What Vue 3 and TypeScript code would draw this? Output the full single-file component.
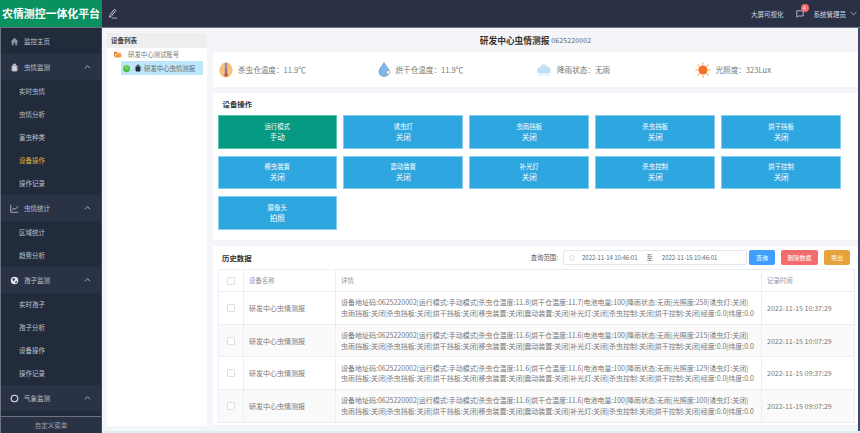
<script setup lang="ts">
const menu = [
  { name: '监控主页', icon: 'home', subs: [] as string[] },
  { name: '虫情监测', icon: 'bug', subs: ['实时虫情', '虫情分析', '害虫种类', '设备操作', '操作记录'] },
  { name: '虫情统计', icon: 'chart', subs: ['区域统计', '趋势分析'] },
  { name: '孢子监测', icon: 'globe', subs: ['实时孢子', '孢子分析', '设备操作', '操作记录'] },
  { name: '气象监测', icon: 'ring', subs: [] as string[] },
];

const ops = [
  ['运行模式', '手动'], ['诱虫灯', '关闭'], ['虫雨挡板', '关闭'], ['杀虫挡板', '关闭'], ['烘干挡板', '关闭'],
  ['移虫装置', '关闭'], ['震动装置', '关闭'], ['补光灯', '关闭'], ['杀虫控制', '关闭'], ['烘干控制', '关闭'],
  ['摄像头', '拍照'],
];

const rows = [
  { a: '11.8', b: '11.7', lux: '258', time: '2022-11-15 10:37:29' },
  { a: '11.6', b: '11.6', lux: '215', time: '2022-11-15 10:07:29' },
  { a: '11.6', b: '11.6', lux: '129', time: '2022-11-15 09:37:29' },
  { a: '11.6', b: '11.6', lux: '100', time: '2022-11-15 09:07:29' },
];

const detail = (r: { a: string; b: string; lux: string }) =>
  `设备地址码:0625220002|运行模式:手动模式|杀虫仓温度:${r.a}|烘干仓温度:${r.b}|电池电量:100|降雨状态:无雨|光照度:${r.lux}|诱虫灯:关闭|虫雨挡板:关闭|杀虫挡板:关闭|烘干挡板:关闭|移虫装置:关闭|震动装置:关闭|补光灯:关闭|杀虫控制:关闭|烘干控制:关闭|经度:0.0|纬度:0.0`;
</script>

<template>
  <div class="page">
    <header class="topbar">
      <div class="logo">农情测控一体化平台</div>
      <svg class="pen" viewBox="0 0 12 12" width="11" height="11">
        <path d="M3 8 8 1.5l1.6 1.2L4.6 9.2 2.8 10z" fill="none" stroke="#d5d9e2" stroke-width="1" />
        <path d="M5 11h6" stroke="#d5d9e2" stroke-width="0.8" />
      </svg>
      <div class="top-right">
        <span>大屏可视化</span>
        <span class="msg">
          <svg viewBox="0 0 10 10" width="8" height="8">
            <path d="M1 1h8v6.5H3L1 9z" fill="none" stroke="#d5d9e2" stroke-width="1" />
          </svg>
          <i class="badge">4</i>
        </span>
        <span class="user">系统管理员</span>
        <svg viewBox="0 0 10 6" width="7" height="5">
          <path d="M1 1l4 4 4-4" fill="none" stroke="#d5d9e2" stroke-width="1" />
        </svg>
      </div>
    </header>

    <div class="body">
      <aside class="sidebar">
        <nav class="nav">
          <template v-for="m in menu" :key="m.name">
            <div class="nav-item">
              <svg class="nav-icon" viewBox="0 0 12 12" width="9" height="9">
                <path v-if="m.icon === 'home'" d="M6 1 .8 6h1.6v5h2.5V7.6h2.2V11h2.5V6h1.6z" fill="#8d95a5" />
                <path v-else-if="m.icon === 'bug'" d="M4.5 2.6a1.5 1.5 0 0 1 3 0zM3 3.6h6v7.2H3zM1 5.2h2M9 5.2h2M1 8.4h2M9 8.4h2M6 3.6v7.2" fill="#cdd2dc" stroke="#cdd2dc" stroke-width="0.8" />
                <path v-else-if="m.icon === 'chart'" d="M1 1v10h10M2.5 8.5l2.5-3 2 1.6L10.5 3" fill="none" stroke="#cdd2dc" stroke-width="1" />
                <template v-else-if="m.icon === 'globe'">
                  <circle cx="6" cy="6" r="5" fill="#dfe3ea" />
                  <path d="M3 3.5 6 3l.6 2-2 2zM7.5 7l2-.6-.8 2.6-1.6.6z" fill="#2a3346" />
                </template>
                <circle v-else cx="6" cy="6" r="4.4" fill="none" stroke="#dfe3ea" stroke-width="1.5" />
              </svg>
              <span>{{ m.name }}</span>
              <svg v-if="m.name !== '监控主页'" class="chev" viewBox="0 0 10 6" width="7" height="4">
                <path d="M1 5l4-4 4 4" fill="none" stroke="#c8cdd8" stroke-width="1.2" />
              </svg>
            </div>
            <div
              v-for="s in m.subs"
              :key="m.name + s"
              class="nav-sub"
              :class="{ active: m.name === '虫情监测' && s === '设备操作' }"
            >{{ s }}</div>
          </template>
        </nav>
        <div class="nav-foot">自定义菜单</div>
      </aside>

      <section class="tree">
        <div class="tree-title">设备列表</div>
        <div class="tree-root">
          <svg viewBox="0 0 12 10" width="8" height="7">
            <path d="M0 1h4l1 1.2h5V4H2.4L0 9z" fill="#d9822b" />
            <path d="M2.8 4.6H12L9.8 9.6H.6z" fill="#ee9a3a" />
          </svg>
          <span>研发中心测试账号</span>
        </div>
        <div class="tree-leaf">
          <i class="dot"></i>
          <svg viewBox="0 0 12 12" width="8" height="8">
            <path d="M4.5 2.6a1.5 1.5 0 0 1 3 0zM3 3.6h6v7.2H3zM1 5.2h2M9 5.2h2M1 8.4h2M9 8.4h2" fill="#26313a" stroke="#26313a" stroke-width="0.8" />
          </svg>
          <span>研发中心虫情测报</span>
        </div>
      </section>

      <main class="main">
        <div class="title"><b>研发中心虫情测报</b><span>0625220002</span></div>

        <div class="card stats">
          <div class="stat">
            <svg viewBox="0 0 14 16" width="14" height="16">
              <ellipse cx="7" cy="8" rx="6.6" ry="7.6" fill="#f4c27c" />
              <rect x="5.8" y="0.6" width="2.4" height="13" rx="1.2" fill="#8d8fb8" />
              <rect x="6.5" y="6" width="1" height="7" fill="#c0504d" />
              <circle cx="7" cy="13" r="1.8" fill="#c0504d" />
            </svg>
            <span>杀虫仓温度：11.9℃</span>
          </div>
          <div class="stat">
            <svg viewBox="0 0 14 16" width="13" height="15">
              <path d="M6.5.5C5 4 1 7 1 10.5a5.5 5 0 0 0 11 0C12 7 8 4 6.5.5z" fill="#7db9ec" stroke="#4d7faa" stroke-width="0.6" />
              <circle cx="11" cy="11" r="2" fill="#fff" stroke="#777" stroke-width="0.6" />
            </svg>
            <span>烘干仓温度：11.9℃</span>
          </div>
          <div class="stat">
            <svg viewBox="0 0 16 12" width="16" height="12">
              <path d="M4 9.5a3 3 0 0 1 0-6 4 4 0 0 1 7.6-.6A3.4 3.4 0 0 1 12.4 9.5z" fill="#bfe0f5" />
              <path d="M2 11h12" stroke="#d3e9f7" stroke-width="1" />
            </svg>
            <span>降雨状态：无雨</span>
          </div>
          <div class="stat">
            <svg viewBox="0 0 16 16" width="16" height="16">
              <circle cx="8" cy="8" r="4.6" fill="#f2702a" />
              <path d="M8 .4v2.4M8 13.2v2.4M.4 8h2.4M13.2 8h2.4M2.6 2.6l1.7 1.7M11.7 11.7l1.7 1.7M13.4 2.6l-1.7 1.7M4.3 11.7l-1.7 1.7" stroke="#f5a33c" stroke-width="1.1" />
            </svg>
            <span>光照度：323Lux</span>
          </div>
        </div>

        <div class="card ops">
          <div class="card-title">设备操作</div>
          <div class="op-grid">
            <div v-for="(op, i) in ops" :key="op[0]" class="op" :class="{ green: i === 0 }">
              <span class="op-name">{{ op[0] }}</span>
              <span class="op-val">{{ op[1] }}</span>
            </div>
          </div>
        </div>

        <div class="card history">
          <div class="hist-head">
            <div class="card-title">历史数据</div>
            <span class="range-label">查询范围:</span>
            <div class="range">
              <svg viewBox="0 0 10 10" width="6" height="6">
                <circle cx="5" cy="5" r="4.4" fill="none" stroke="#c0c4cc" stroke-width="0.8" />
                <path d="M5 2.4V5l1.8 1" fill="none" stroke="#c0c4cc" stroke-width="0.8" />
              </svg>
              <span class="d1">2022-11-14 10:46:01</span>
              <span class="to">至</span>
              <span>2022-11-15 10:46:01</span>
            </div>
            <button class="btn blue">查询</button>
            <button class="btn red">删除数据</button>
            <button class="btn orange">导出</button>
          </div>
          <div class="table">
            <div class="tr th">
              <div class="td c0"><i class="check"></i></div>
              <div class="td c1">设备名称</div>
              <div class="td c2">详情</div>
              <div class="td c3">记录时间</div>
            </div>
            <div v-for="(r, i) in rows" :key="r.time" class="tr" :class="{ odd: i % 2 === 1 }">
              <div class="td c0"><i class="check"></i></div>
              <div class="td c1 name">研发中心虫情测报</div>
              <div class="td c2 detail">{{ detail(r) }}</div>
              <div class="td c3 name">{{ r.time }}</div>
            </div>
          </div>
        </div>
      </main>
    </div>
  </div>
</template>

<style>
html, body { margin: 0; background: #f3f5f8; }
</style>

<style scoped>
.page {
  width: 860px;
  height: 433px;
  overflow: hidden;
  display: flex;
  flex-direction: column;
  font-family: "Noto Sans CJK SC", "Noto Sans", sans-serif;
  background: #f3f5f8;
}

.topbar {
  height: 27px;
  flex-shrink: 0;
  display: flex;
  align-items: center;
  background: #2a3146;
  border-bottom: 1px solid #6d7380;
  color: #d5d9e2;
}

.logo {
  width: 102px;
  height: 27px;
  line-height: 27px;
  text-align: center;
  font-size: 10.9px;
  font-weight: 700;
  color: #fff;
  background: #0a9160;
  white-space: nowrap;
}

.pen { margin-left: 5px; }

.top-right {
  margin-left: auto;
  padding-right: 3px;
  display: flex;
  align-items: center;
  font-size: 6.5px;
}

.msg {
  position: relative;
  display: flex;
  margin-left: 12px;
}

.badge {
  position: absolute;
  left: 5px;
  top: -6px;
  width: 8px;
  height: 8px;
  line-height: 8px;
  border-radius: 50%;
  background: #f56c6c;
  color: #fff;
  font-size: 5px;
  font-style: normal;
  text-align: center;
}

.user { margin: 0 4px 0 10px; }

.body {
  flex: 1;
  min-height: 0;
  display: flex;
  border-bottom: 2px solid #d9eff2;
}

.sidebar {
  width: 102px;
  box-sizing: border-box;
  margin-bottom: -2px;
  flex-shrink: 0;
  display: flex;
  flex-direction: column;
  background: #222b3c;
  border-left: 1px solid #6d7380;
  border-right: 1px solid #1b5482;
}

.nav {
  flex: 1;
  min-height: 0;
  overflow: hidden;
}

.nav-item {
  height: 26px;
  display: flex;
  align-items: center;
  padding-left: 9px;
  background: #2a3346;
  color: #bcc2ce;
  font-size: 6.5px;
}

.nav-item:first-child { background: #222b3c; }

.nav-icon {
  margin-right: 5px;
  flex-shrink: 0;
}

.chev { margin: 0 10px 0 auto; }

.nav-sub {
  height: 23px;
  line-height: 23px;
  padding-left: 18px;
  color: #bcc2ce;
  font-size: 6.5px;
}

.nav-sub.active { color: #e0b040; }

.nav-foot {
  height: 16px;
  line-height: 16px;
  flex-shrink: 0;
  text-align: center;
  font-size: 6.5px;
  color: #9ba2b0;
  border-top: 1px solid #6d7380;
  background: #2a3346;
}

.tree {
  width: 100px;
  margin: 5px 0 5px 5px;
  flex-shrink: 0;
  background: #fff;
}

.tree-title {
  height: 15px;
  line-height: 15px;
  padding-left: 4px;
  background: #eeeeee;
  font-size: 6.5px;
  font-weight: 700;
  color: #444;
}

.tree-root {
  height: 13px;
  margin-top: 0;
  display: flex;
  align-items: center;
  padding-left: 7px;
  font-size: 6.4px;
  color: #777;
}

.tree-root span { margin-left: 6px; }

.tree-leaf {
  width: 82px;
  height: 14px;
  margin-left: 14px;
  display: flex;
  align-items: center;
  background: #bde6fb;
  font-size: 6.4px;
  color: #666;
}

.dot {
  width: 7px;
  height: 7px;
  margin: 0 4px 0 2px;
  border-radius: 50%;
  background: radial-gradient(circle at 45% 35%, #7de05a, #22a52a);
}

.tree-leaf span { margin-left: 2px; }

.main {
  flex: 1;
  min-width: 0;
  margin-left: 6px;
  border-right: 2px solid #3a4a68;
  display: flex;
  flex-direction: column;
}

.title {
  height: 24px;
  display: flex;
  align-items: center;
  justify-content: center;
  gap: 2px;
  color: #333;
  font-size: 8.7px;
}

.title span {
  font-size: 7px;
  color: #666;
  letter-spacing: 0.1px;
}

.card { background: #fff; }

.stats {
  height: 35px;
  flex-shrink: 0;
  display: grid;
  grid-template-columns: repeat(4, 158.5px);
  align-items: center;
  padding-left: 6px;
}

.stat {
  display: flex;
  align-items: center;
  gap: 5px;
  font-size: 7.6px;
  color: #777;
}

.ops {
  height: 147px;
  flex-shrink: 0;
  margin-top: 6px;
  box-sizing: border-box;
  padding: 0 0 0 4.5px;
}

.card-title {
  height: 22px;
  line-height: 22px;
  padding-left: 5px;
  font-size: 7.4px;
  font-weight: 700;
  color: #333;
}

.op-grid {
  display: grid;
  grid-template-columns: repeat(5, 119.4px);
  grid-auto-rows: 33.5px;
  column-gap: 6.6px;
  row-gap: 7px;
}

.op {
  display: flex;
  flex-direction: column;
  align-items: center;
  justify-content: center;
  background: #2ea7e0;
  border: 1px solid #86cdee;
  box-sizing: border-box;
  color: #fff;
}

.op.green {
  background: #069a82;
  border-color: #5cc2b2;
}

.op-name {
  font-size: 6.4px;
  line-height: 10px;
}

.op-val {
  font-size: 7.5px;
  line-height: 10px;
}

.history {
  margin-top: 6px;
  height: 179px;
  flex-shrink: 0;
  box-sizing: border-box;
  padding-left: 5px;
  overflow: hidden;
}

.hist-head {
  height: 23px;
  display: flex;
  align-items: center;
}

.hist-head .card-title {
  padding-left: 4px;
  margin-right: auto;
}

.range-label {
  font-size: 6.4px;
  color: #555;
  margin-right: 5px;
}

.range {
  width: 184px;
  height: 15px;
  box-sizing: border-box;
  display: flex;
  align-items: center;
  padding-left: 5px;
  border: 1px solid #e4e7ed;
  border-radius: 2px;
  font-size: 6px;
  color: #666;
}

.d1 { margin-left: 7px; }

.to {
  margin: 0 9px;
  font-size: 6.4px;
}

.btn {
  height: 15px;
  margin-left: 2px;
  padding: 0;
  border: 0;
  border-radius: 2px;
  color: #fff;
  font-family: inherit;
  font-size: 6px;
}

.btn.blue {
  width: 26px;
  background: #409eff;
}

.btn.red {
  width: 37px;
  margin-left: 6px;
  background: #f56c6c;
}

.btn.orange {
  width: 26px;
  margin: 0 8px 0 6px;
  background: #e6a23c;
}

.table {
  width: 635px;
  border-top: 1px solid #ebeef5;
  border-left: 1px solid #ebeef5;
  border-right: 1px solid #ebeef5;
}

.tr {
  display: flex;
  height: 32.7px;
  border-bottom: 1px solid #ebeef5;
  box-sizing: border-box;
}

.tr.th { height: 22px; }

.tr.odd { background: #fafafa; }

.td {
  display: flex;
  align-items: center;
  box-sizing: border-box;
  padding-left: 5px;
  border-right: 1px solid #ebeef5;
  font-size: 6.4px;
  color: #909399;
}

.td.c3 { border-right: 0; }

.c0 {
  width: 25px;
  justify-content: center;
  padding-left: 0;
}

.c1 { width: 92px; }

.c2 { width: 426px; }

.c3 { width: 91px; }

.name {
  font-size: 7px;
  color: #777;
}

.detail {
  font-size: 7px;
  line-height: 10.7px;
  color: #777;
  word-break: break-all;
  padding-right: 6px;
}

.check {
  width: 6px;
  height: 6px;
  border: 1px solid #dcdfe6;
  border-radius: 1px;
  background: #fff;
}
</style>
